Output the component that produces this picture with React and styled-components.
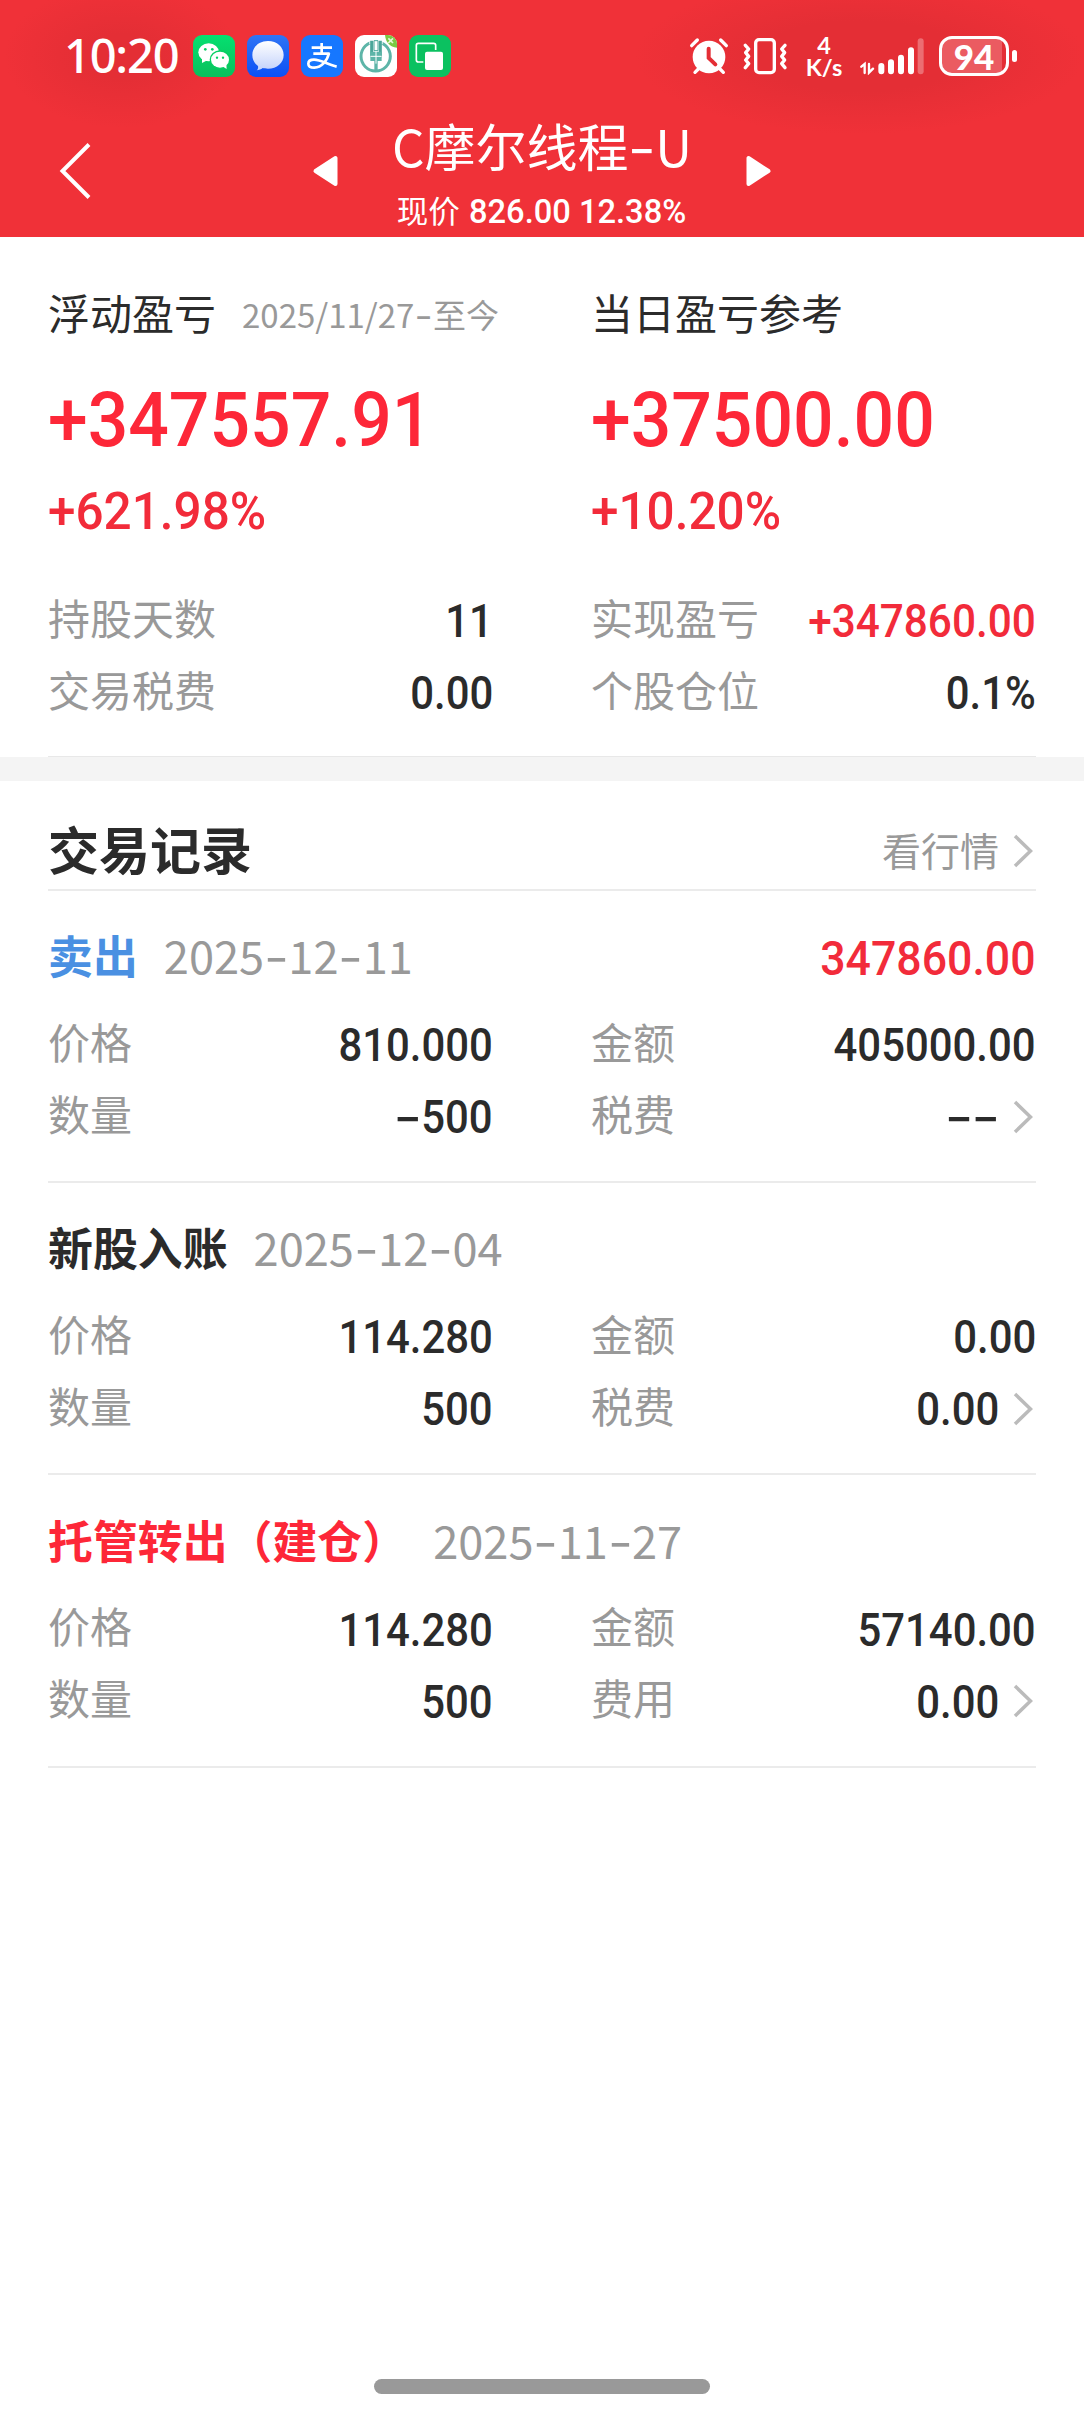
import React from "react";
import styled, { createGlobalStyle } from "styled-components";

const GlobalStyle = createGlobalStyle`
  * {
    box-sizing: border-box;
  }
  body {
    margin: 0;
    background: #fff;
    font-family: "Noto Sans CJK SC", "Noto Sans", sans-serif;
    color: #2b2b2b;
  }
`;

const Page = styled.div`
  width: 1084px;
  height: 2412px;
  display: flex;
  flex-direction: column;
  background: #fff;
`;

const Header = styled.header`
  height: 236.5px;
  color: #fff;
  background:
    radial-gradient(ellipse 118px 72px at 122px 56px, #e42e35 30%, rgba(228, 46, 53, 0) 100%),
    radial-gradient(ellipse 225px 78px at 860px 56px, #e42e35 45%, rgba(228, 46, 53, 0) 100%),
    #f03138;
`;

const StatusBar = styled.div`
  height: 112px;
  padding: 0 67px 0 64px;
  display: flex;
  align-items: center;
  justify-content: space-between;
`;

const StatusGroup = styled.div`
  display: flex;
  align-items: center;
`;

const Clock = styled.div`
  width: 129px;
  font-family: "Noto Sans", sans-serif;
  font-size: 47px;
  font-weight: 500;
  line-height: 60px;
  letter-spacing: -1.2px;
  margin-top: -3px;
`;

const Tile = styled.div`
  width: 42px;
  height: 42px;
  margin-right: 12px;
  border-radius: 9px;
  overflow: hidden;
  display: flex;
  background: ${(props) => props.$bg};
`;

const Speed = styled.div`
  width: 40px;
  margin: 0 15px 0 16px;
  text-align: center;
  font-family: Lato, sans-serif;
  font-weight: 700;
  font-size: 23.5px;
  line-height: 22.5px;
`;

const Battery = styled.div`
  width: 70px;
  height: 40px;
  margin-left: 14px;
  border: 3px solid #fff;
  border-radius: 13px;
  background: linear-gradient(90deg, #eb5b61 94%, #e42e35 94%);
  font-family: Lato, sans-serif;
  font-weight: 900;
  font-size: 35px;
  line-height: 34px;
  text-align: center;
`;

const BatteryTip = styled.div`
  width: 5px;
  height: 12px;
  margin-left: 3px;
  border-radius: 3px;
  background: #fff;
`;

const TitleBar = styled.div`
  height: 124px;
  padding: 0 56px;
  display: grid;
  grid-template-columns: 282px 1fr 282px;
  align-items: start;
`;

const NavIcons = styled.div`
  height: 118px;
  display: flex;
  align-items: center;
  justify-content: space-between;
`;

const TitleText = styled.div`
  display: flex;
  flex-direction: column;
  align-items: center;
  white-space: nowrap;
  padding-top: 3px;
`;

const StockName = styled.h1`
  margin: 0;
  height: 60px;
  font-size: 51px;
  font-weight: 400;
  line-height: 60px;
`;

const StockPrice = styled.div`
  margin-top: 14px;
  height: 40px;
  display: flex;
  align-items: center;
  gap: 9px;
  font-size: 31.5px;
  line-height: 40px;
`;

const PriceValue = styled.span`
  margin-right: -8px;
  padding-top: 4px;
  font-size: 34px;
`;

/* digits in the narrow numeral style */
const Num = styled.span`
  display: block;
  font-family: Roboto, sans-serif;
  font-weight: 500;
  transform: scaleX(${(props) => props.$scale || 0.93});
  transform-origin: ${(props) => props.$origin || "right"} center;
`;

const Dash = styled.span`
  display: inline-block;
  font-family: Inter, sans-serif;
  line-height: 1;
  margin: 0 ${(props) => (props.$wide ? "4px" : "1.7px")};
  transform: scaleX(${(props) => (props.$wide ? 1.5 : 1.2)});
`;

const Summary = styled.section`
  margin: 0 48px;
  padding: 45px 0 31px;
  border-bottom: 1px solid #e8e8e8;
`;

const Columns = styled.div`
  display: grid;
  grid-template-columns: 445px 445px;
  column-gap: 98px;
`;

const Label = styled.div`
  height: 60px;
  font-size: 42px;
  line-height: 60px;
  white-space: nowrap;
`;

const Period = styled.span`
  margin-left: 26px;
  color: #999;
  font-size: 33px;
  line-height: 40px;
  vertical-align: 2px;
`;

const Amount = styled.div`
  display: flex;
  margin-top: 33px;
  height: 90px;
  color: #fd2738;
  font-size: 76px;
  line-height: 90px;
`;

const Percent = styled.div`
  display: flex;
  margin-top: 17px;
  height: 60px;
  color: #f22b3a;
  font-size: 51px;
  line-height: 60px;
`;

const Fields = styled(Columns)`
  margin-top: ${(props) => props.$top}px;
`;

const Field = styled.div`
  height: 72px;
  display: flex;
  align-items: center;
  justify-content: space-between;
`;

const FieldName = styled.span`
  color: #999;
  font-size: 42px;
  line-height: 60px;
`;

const FieldValue = styled.span`
  display: flex;
  align-items: center;
  padding-top: 11px;
  font-size: 45.5px;
  line-height: 54px;
  color: ${(props) => (props.$red ? "#f22b3a" : "#2b2b2b")};
`;

const Band = styled.div`
  height: 24px;
  background: #f4f4f4;
`;

const Records = styled.section`
  margin: 0 48px;
`;

const RecordsHead = styled.div`
  height: 110px;
  padding-top: 26px;
  display: flex;
  align-items: center;
  justify-content: space-between;
  border-bottom: 2px solid #ebebeb;
`;

const RecordsTitle = styled.h2`
  margin: 0;
  font-size: 51px;
  font-weight: 700;
  line-height: 76px;
`;

const QuoteLink = styled.div`
  display: flex;
  align-items: center;
  padding-top: 2px;
  color: #999;
  font-size: 39px;
  line-height: 60px;
`;

const Record = styled.article`
  height: 292.4px;
  padding-top: 34px;
  border-bottom: 2px solid #ebebeb;
`;

const RecordHead = styled.div`
  height: 61px;
  display: flex;
  align-items: center;
`;

const RecordType = styled.span`
  font-size: 44.9px;
  font-weight: 700;
  line-height: 60px;
  color: ${(props) => props.$color};
`;

const RecordDate = styled.span`
  margin-left: 26px;
  flex: 1;
  color: #999;
  font-size: 45.2px;
  line-height: 60px;
`;

const RecordProfit = styled.span`
  padding-top: 8px;
  color: #f22b3a;
  font-size: 48px;
  line-height: 56px;
`;

const HomeBar = styled.div`
  width: 336px;
  height: 15px;
  margin: auto auto 18px 374px;
  border-radius: 8px;
  background: #999;
`;

const ChevronSvg = styled.svg`
  margin: ${(props) => (props.$low ? "4px" : "-3px")} 3px 0 14px;
`;

const Chevron = ({ low }) => (
  <ChevronSvg $low={low} width="20" height="34" viewBox="0 0 20 34" fill="none" stroke="#bbb" strokeWidth="3.500">
    <path d="M2 2 17.500 17 2 32" />
  </ChevronSvg>
);

const WechatIcon = () => (
  <svg width="42" height="42" viewBox="0 0 126 126">
    <path d="M27 70 27 84 40 77z" fill="#fff" />
    <ellipse cx="47" cy="52" rx="31" ry="27" fill="#fff" />
    <ellipse cx="81" cy="74" rx="31" ry="28" fill="#07cf62" />
    <ellipse cx="81" cy="74" rx="27" ry="24" fill="#fff" />
    <path d="M88 94 101 102 100 88z" fill="#fff" />
    <circle cx="37" cy="43" r="4" fill="#07cf62" />
    <circle cx="58" cy="43" r="4" fill="#07cf62" />
    <circle cx="72" cy="68" r="3.500" fill="#07cf62" />
    <circle cx="90" cy="68" r="3.500" fill="#07cf62" />
  </svg>
);

const ChatIcon = () => (
  <svg width="42" height="42" viewBox="0 0 126 126">
    <defs>
      <linearGradient id="bubble" x1="0" y1="0" x2="0" y2="1">
        <stop offset="0" stopColor="#fff" />
        <stop offset="1" stopColor="#c3d2fb" />
      </linearGradient>
    </defs>
    <path
      d="M63 18c27 0 47 18 47 42s-20 41-47 41c-7 0-12-1-16-2-5 4-11 6-18 7 4-4 5-8 4-13C22 85 16 74 16 60c0-24 20-42 47-42z"
      fill="url(#bubble)"
    />
  </svg>
);

const AlipayIcon = () => (
  <svg width="42" height="42" viewBox="0 0 126 126" fill="none" stroke="#fff">
    <path d="M32 38h61M62 24v31M37 56h49" strokeWidth="8" />
    <path d="M84 54C79 77 62 98 40 98c-12 0-18-5-18-12s6-12 17-12c20 0 42 15 68 21" strokeWidth="8" />
  </svg>
);

const BankIcon = () => (
  <svg width="42" height="42" viewBox="0 0 126 126">
    <path d="M90 0h36v38c-22-2-34-16-36-38z" fill="#7ac943" />
    <path d="M100 10l14 14M114 10l-14 14" stroke="#e6f7d8" strokeWidth="5" />
    <circle cx="62" cy="64" r="44" fill="none" stroke="#5db5a8" strokeWidth="9" />
    <path d="M43 12h40v16H43z" fill="#fff" />
    <path d="M50 17v50M76 17v50" stroke="#4ba699" strokeWidth="9" />
    <path d="M57 17h12v30H57z" fill="none" stroke="#4ba699" strokeWidth="3" />
    <path d="M46 50h34v28H46z" fill="#5db5a8" />
    <path d="M58 76h10v32H58z" fill="#5db5a8" />
    <path d="M63 48v38M46 64h34" stroke="#fff" strokeWidth="3" />
  </svg>
);

const CopyIcon = () => (
  <svg width="42" height="42" viewBox="0 0 126 126">
    <rect x="22" y="25" width="58" height="56" rx="6" fill="none" stroke="#fff" strokeWidth="5" />
    <rect x="43" y="45" width="64" height="66" rx="8" fill="#0bc160" />
    <rect x="48" y="50" width="54" height="55" rx="6" fill="#fff" />
  </svg>
);

const AlarmSvg = styled.svg`
  margin-right: 14px;
`;

const AlarmIcon = () => (
  <AlarmSvg width="40" height="38" viewBox="60 50 120 114" fill="none" strokeLinecap="round">
    <circle cx="120" cy="110" r="49" fill="#fff" />
    <path d="M68 76 85 59M172 76 155 59M78 156 88 146M163 156 153 146" stroke="#fff" strokeWidth="10" />
    <path d="M119 85v28l20 19" stroke="#e42e35" strokeWidth="12" />
  </AlarmSvg>
);

const VibrateIcon = () => (
  <svg width="45" height="38" viewBox="222 50 135 114" fill="none" stroke="#fff" strokeLinecap="round" strokeLinejoin="round">
    <rect x="260" y="58" width="56" height="99" rx="10" strokeWidth="10" />
    <path d="M229 75 239 86 230 97 239 108 230 119 239 130 229 142" strokeWidth="10" />
    <path d="M348 75 338 86 347 97 338 108 347 119 338 130 348 142" strokeWidth="10" />
  </svg>
);

const SignalIcon = () => (
  <svg width="66" height="38" viewBox="570 50 198 114" fill="none" stroke="#fff" strokeLinecap="round">
    <path d="M637 137v16M666 126v27M696 112v41M726 90v63" strokeWidth="18" />
    <path d="M755 63v90" strokeWidth="18" opacity="0.3" />
    <path d="M577 139 587 131v27M600 131v26l12-12" strokeWidth="7" />
  </svg>
);

const Arrow = ({ right }) => (
  <svg width="26" height="32" viewBox="0 0 26 32" fill="#fff" stroke="#fff" strokeWidth="4" strokeLinejoin="round">
    <path d={right ? "M2.500 3v26L22.500 16z" : "M23.500 3v26L3.500 16z"} />
  </svg>
);

const records = [
  {
    type: "卖出",
    color: "#4a90e2",
    date: "2025-12-11",
    profit: "347860.00",
    price: "810.000",
    amount: "405000.00",
    count: "-500",
    feeName: "税费",
    fee: "--",
  },
  {
    type: "新股入账",
    color: "#2b2b2b",
    date: "2025-12-04",
    price: "114.280",
    amount: "0.00",
    count: "500",
    feeName: "税费",
    fee: "0.00",
  },
  {
    type: "托管转出（建仓）",
    color: "#fd2738",
    date: "2025-11-27",
    price: "114.280",
    amount: "57140.00",
    count: "500",
    feeName: "费用",
    fee: "0.00",
  },
];

// hyphens are wider than the font's own
const withDashes = (text, wide) =>
  text.split(/(-)/).map((part, i) => (part === "-" ? <Dash key={i} $wide={wide}>-</Dash> : part));

const Item = ({ name, value, red, arrow }) => (
  <Field>
    <FieldName>{name}</FieldName>
    <FieldValue $red={red}>
      <Num $scale={red ? 0.93 : 0.92}>{withDashes(value, true)}</Num>
      {arrow && <Chevron />}
    </FieldValue>
  </Field>
);

const App = () => {
  return (
    <Page>
      <GlobalStyle />
      <Header>
        <StatusBar>
          <StatusGroup>
            <Clock>10:20</Clock>
            <Tile $bg="linear-gradient(#05e070, #09bf5c)"><WechatIcon /></Tile>
            <Tile $bg="linear-gradient(#2f74f5, #0b50f5)"><ChatIcon /></Tile>
            <Tile $bg="#1677ff"><AlipayIcon /></Tile>
            <Tile $bg="#fff"><BankIcon /></Tile>
            <Tile $bg="#0bc160"><CopyIcon /></Tile>
          </StatusGroup>
          <StatusGroup>
            <AlarmIcon />
            <VibrateIcon />
            <Speed>
              <div>4</div>
              <div>K/s</div>
            </Speed>
            <SignalIcon />
            <Battery>94</Battery>
            <BatteryTip />
          </StatusGroup>
        </StatusBar>
        <TitleBar>
          <NavIcons>
            <svg width="36" height="58" viewBox="0 0 36 58" fill="none" stroke="#fff" strokeWidth="4">
              <path d="M33 2.500 6.500 29 33 55.500" />
            </svg>
            <Arrow />
          </NavIcons>
          <TitleText>
            <StockName>C摩尔线程{withDashes("-U")}</StockName>
            <StockPrice>
              <span>现价</span>
              <PriceValue><Num $origin="left" $scale={0.96}>826.00 12.38%</Num></PriceValue>
            </StockPrice>
          </TitleText>
          <NavIcons>
            <Arrow right />
          </NavIcons>
        </TitleBar>
      </Header>

      <Summary>
        <Columns>
          <div>
            <Label>
              浮动盈亏<Period>2025/11/27{withDashes("-")}至今</Period>
            </Label>
            <Amount><Num $origin="left" $scale={0.94}>+347557.91</Num></Amount>
            <Percent><Num $origin="left" $scale={0.97}>+621.98%</Num></Percent>
          </div>
          <div>
            <Label>当日盈亏参考</Label>
            <Amount><Num $origin="left" $scale={0.94}>+37500.00</Num></Amount>
            <Percent><Num $origin="left" $scale={0.97}>+10.20%</Num></Percent>
          </div>
        </Columns>
        <Fields $top={39}>
          <Item name="持股天数" value="11" />
          <Item name="实现盈亏" value="+347860.00" red />
          <Item name="交易税费" value="0.00" />
          <Item name="个股仓位" value="0.1%" />
        </Fields>
      </Summary>
      <Band />

      <Records>
        <RecordsHead>
          <RecordsTitle>交易记录</RecordsTitle>
          <QuoteLink>
            看行情
            <Chevron low />
          </QuoteLink>
        </RecordsHead>
        {records.map((record) => (
          <Record key={record.date}>
            <RecordHead>
              <RecordType $color={record.color}>{record.type}</RecordType>
              <RecordDate>{withDashes(record.date)}</RecordDate>
              {record.profit && (
                <RecordProfit><Num>{record.profit}</Num></RecordProfit>
              )}
            </RecordHead>
            <Fields $top={19}>
              <Item name="价格" value={record.price} />
              <Item name="金额" value={record.amount} />
              <Item name="数量" value={record.count} />
              <Item name={record.feeName} value={record.fee} arrow />
            </Fields>
          </Record>
        ))}
      </Records>
      <HomeBar />
    </Page>
  );
};

export default App;
